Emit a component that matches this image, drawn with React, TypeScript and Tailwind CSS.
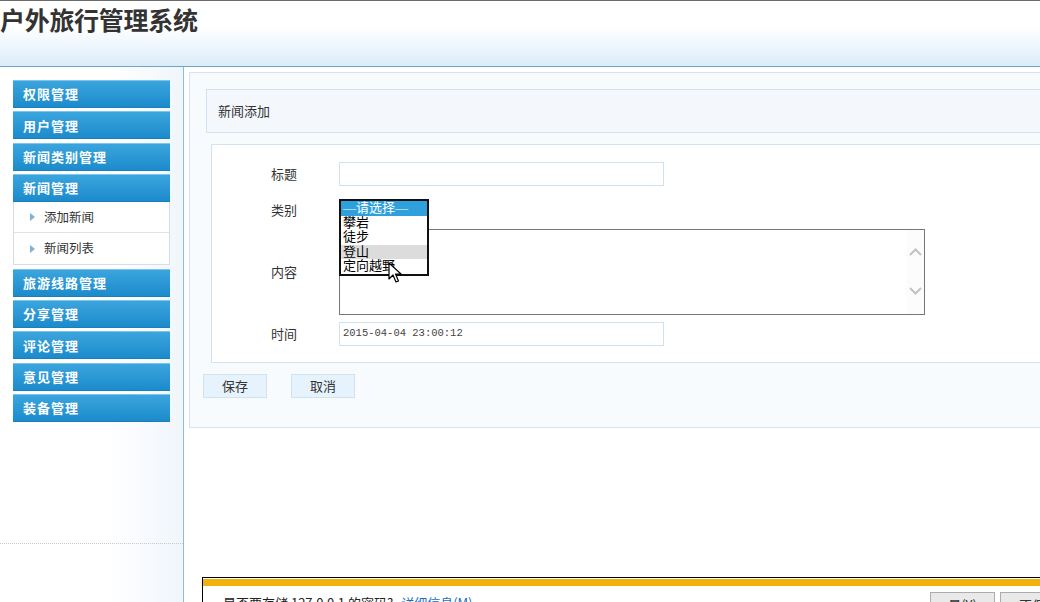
import React from "react";

const menus = [
    { name: "权限管理" },
    { name: "用户管理" },
    { name: "新闻类别管理" },
    { name: "新闻管理", children: ["添加新闻", "新闻列表"] },
    { name: "旅游线路管理" },
    { name: "分享管理" },
    { name: "评论管理" },
    { name: "意见管理" },
    { name: "装备管理" },
];

const options = ["—请选择—", "攀岩", "徒步", "登山", "定向越野"];

const cjk = { fontFamily: '"Noto Sans CJK SC", "Liberation Sans", sans-serif' };
const songti = { fontFamily: '"Liberation Serif", "Noto Sans CJK SC", serif' };

const Cursor: React.FC = () => (
    <svg width="14" height="22" viewBox="0 0 14 22" className="absolute left-[388px] top-[262px] z-30">
        <path d="M1 1 L1 17 L5 13 L8 20 L10.5 19 L7.5 12 L13 12 Z" fill="#fff" stroke="#000" strokeWidth="1.2" strokeLinejoin="round" />
    </svg>
);

const App: React.FC = () => {
    return (
        <div className="relative w-full h-[602px] overflow-hidden bg-white text-[#333]" style={cjk}>
            {/* header */}
            <div className="h-[67px] border-t border-[#6b6b6b] border-b border-b-[#6fa6c4] bg-gradient-to-b from-white from-40% to-[#dcecfa]">
                <h1 className="text-[25px] font-bold leading-[34px] pt-[1px] text-[#333] tracking-[-0.3px]">
                    户外旅行管理系统
                </h1>
            </div>

            <div className="flex h-[535px]">
                {/* sidebar */}
                <div className="w-[184px] shrink-0 border-r border-[#8dbdd4] bg-gradient-to-r from-white from-60% to-[#f0f6fc] relative">
                    <div className="pt-[13px] pl-[13px] w-[170px] flex flex-col gap-[3.4px]">
                        {menus.map((m) => (
                            <div key={m.name}>
                                <div className="h-[28px] flex items-center pl-[10px] text-white text-[13px] font-bold tracking-[1px] border-t border-[#7cc5ec] border-b border-b-[#1a7fba] bg-gradient-to-b from-[#3aa5dd] to-[#1b8bcc]">
                                    {m.name}
                                </div>
                                {m.children && (
                                    <div className="border-x border-b border-[#d6dde3] bg-white">
                                        {m.children.map((c, i) => (
                                            <div
                                                key={c}
                                                className={`h-[31px] flex items-center pl-[16px] text-[12.5px] text-[#333] ${
                                                    i === 0 ? "border-b border-[#dde3e8]" : ""
                                                }`}
                                            >
                                                <span className="w-0 h-0 border-y-[4px] border-y-transparent border-l-[5px] border-l-[#7cb2dc] mr-[9px]" />
                                                {c}
                                            </div>
                                        ))}
                                    </div>
                                )}
                            </div>
                        ))}
                    </div>
                    <div className="absolute left-0 right-0 top-[476px] border-t border-dotted border-[#c8c8c8]" />
                </div>

                {/* main */}
                <div className="flex-1 pl-[5px] pt-[5px]">
                    <div className="border border-r-0 border-[#d4e3f1] bg-[#f7fbfe] pt-[16px] pb-[29px]">
                        <div className="ml-[16px] h-[44px] border border-r-0 border-[#d3e2f0] bg-[#f4f8fc] flex items-center pl-[11px] text-[13px] text-[#333]">
                            新闻添加
                        </div>
                        <div className="ml-[21px] mt-[11px] border border-r-0 border-[#d3e2f0] bg-white pt-[17px] pb-[16px] relative">
                            {/* 标题 */}
                            <div className="flex items-center h-[24px]">
                                <div className="w-[85px] text-right text-[13px]">标题</div>
                                <div className="ml-[42px] w-[325px] h-[24px] border border-[#cfe2f0] bg-white" />
                            </div>
                            {/* 类别 */}
                            <div className="flex items-center h-[20px] mt-[14px]">
                                <div className="w-[85px] text-right text-[13px]">类别</div>
                                <div className="ml-[42px] w-[90px] h-[20px]" />
                            </div>
                            {/* 内容 */}
                            <div className="flex items-center mt-[9px]">
                                <div className="w-[85px] text-right text-[13px]">内容</div>
                                <div className="ml-[42px] w-[586px] h-[86px] border border-[#767676] bg-white flex justify-end">
                                    <div className="w-[18px] h-full bg-[#fcfcfc] flex flex-col items-center justify-between pt-[18px] pb-[19px] text-[#c2c2c2]">
                                        <svg width="13" height="8" viewBox="0 0 13 8">
                                            <path d="M1 7 L6.5 1.5 L12 7" fill="none" stroke="currentColor" strokeWidth="2" />
                                        </svg>
                                        <svg width="13" height="8" viewBox="0 0 13 8">
                                            <path d="M1 1 L6.5 6.5 L12 1" fill="none" stroke="currentColor" strokeWidth="2" />
                                        </svg>
                                    </div>
                                </div>
                            </div>
                            {/* 时间 */}
                            <div className="flex items-center h-[24px] mt-[7px]">
                                <div className="w-[85px] text-right text-[13px]">时间</div>
                                <div
                                    className="ml-[42px] w-[325px] h-[24px] border border-[#cfe2f0] bg-white flex items-center pl-[3px] text-[10.5px] text-[#444]"
                                    style={{ fontFamily: '"Liberation Mono", monospace' }}
                                >
                                    2015-04-04 23:00:12
                                </div>
                            </div>
                        </div>
                        <div className="flex gap-[24px] ml-[13px] mt-[11px]">
                            <button className="w-[64px] h-[24px] border border-[#cfe2f2] bg-[#e6f2fc] text-[13px] text-[#333]">
                                保存
                            </button>
                            <button className="w-[64px] h-[24px] border border-[#cfe2f2] bg-[#e6f2fc] text-[13px] text-[#333]">
                                取消
                            </button>
                        </div>
                    </div>
                </div>
            </div>

            {/* open select list */}
            <div className="absolute left-[339px] top-[199px] w-[90px] border-2 border-[#111] bg-white z-20 text-[13px] leading-[14.6px] text-black" style={songti}>
                {options.map((o, i) => (
                    <div
                        key={o}
                        className={`pl-[2px] h-[14.6px] whitespace-nowrap ${
                            i === 0 ? "bg-[#2ea1dd] text-white" : i === 3 ? "bg-[#dcdcdc]" : ""
                        }`}
                    >
                        {o}
                    </div>
                ))}
            </div>
            <Cursor />

            {/* browser notification bar */}
            <div className="absolute left-[202px] top-[577px] right-0 h-[40px] border-t border-l border-black bg-white z-10">
                <div className="mt-[1px] h-[7px] bg-[#f1b30b]" />
                <div className="flex items-start">
                    <div className="pl-[20px] pt-[9px] text-[13px] leading-[16px] text-[#222]">
                        是否要存储 127.0.0.1 的密码?
                        <span className="ml-[8px] text-[#1a6fc0]">详细信息(M)</span>
                    </div>
                    <div className="ml-auto flex gap-[5px] pt-[6px] mr-[-50px]">
                        <div className="w-[65px] h-[26px] border border-[#acacac] bg-[#e9e9e9] text-[13px] text-center leading-[24px]">是(Y)</div>
                        <div className="w-[90px] h-[26px] border border-[#acacac] bg-[#e9e9e9] text-[13px] pl-[18px] leading-[24px]">不保存(N)</div>
                    </div>
                </div>
            </div>
        </div>
    );
};

export default App;
